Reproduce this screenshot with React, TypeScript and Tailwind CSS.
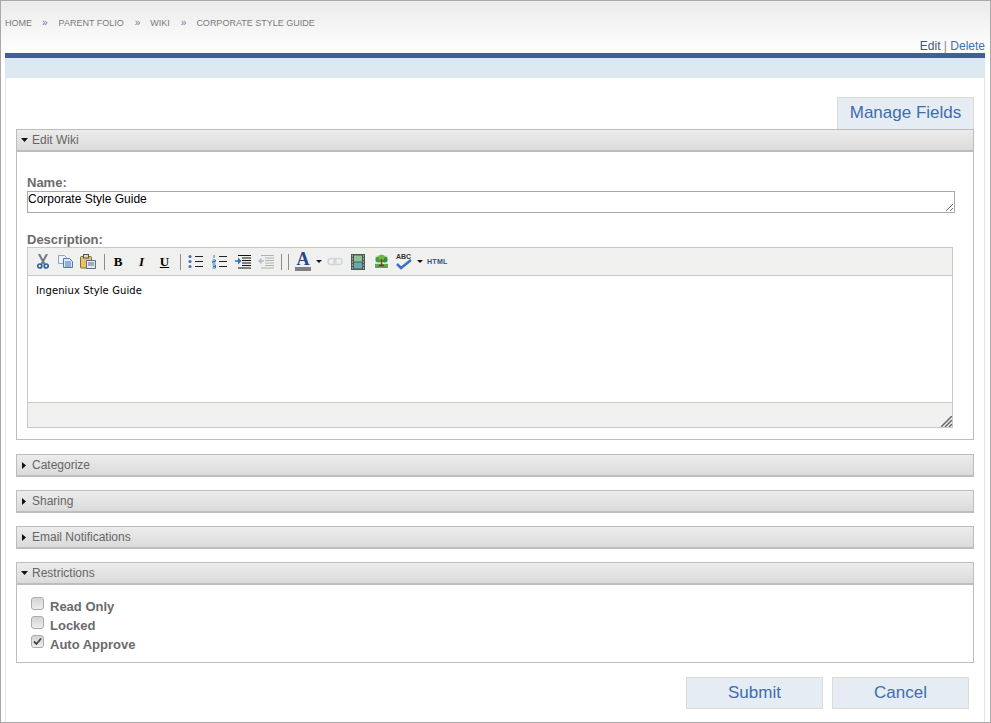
import React from 'react';

const sans = { fontFamily: '"Liberation Sans", Arial, sans-serif' };

const Caret = ({ open }: { open: boolean }) =>
  open ? (
    <svg width="7" height="4" viewBox="0 0 7 4" className="shrink-0">
      <path d="M0 0h7L3.5 4z" fill="#111" />
    </svg>
  ) : (
    <svg width="4" height="7" viewBox="0 0 4 7" className="shrink-0 mx-[1px]">
      <path d="M0 0v7l4-3.5z" fill="#111" />
    </svg>
  );

const PanelHeader = ({ title, open }: { title: string; open?: boolean }) => (
  <div className={`h-[23px] border-2 border-[#bdbdbd] border-t-[1px] border-x-[1px] bg-gradient-to-b from-[#ececec] to-[#dbdbdb] flex items-center pl-[4px] text-[12px] text-[#666666] ${open ? 'gap-[4px]' : 'gap-[5px]'}`}>
    <Caret open={!!open} />
    <span>{title}</span>
  </div>
);

const Sep = ({ ml }: { ml: string }) => <div className={`w-[1px] h-[16px] bg-[#8c8c8c] shrink-0 ${ml}`} />;

const DownArrow = ({ ml }: { ml: string }) => (
  <svg width="6" height="3" viewBox="0 0 6 3" className={`shrink-0 ${ml}`}>
    <path d="M0 0h6L3 3z" fill="#111" />
  </svg>
);

const Lines = ({ color }: { color: string }) => (
  <path d="M7 2.5h8M7 7.5h8M7 12.5h8" stroke={color} strokeWidth="1" />
);

const Toolbar = () => (
  <div className="h-[28px] bg-[#f0f0ee] border-b border-[#c9c9c9] flex items-center">
    {/* cut */}
    <svg width="12" height="15" viewBox="0 0 12 15" className="ml-[9px] shrink-0">
      <path d="M2 0l5.500 10M10 0L4.500 10" stroke="#6f7c88" strokeWidth="2" />
      <circle cx="2.800" cy="12" r="2" fill="none" stroke="#2f5f9e" strokeWidth="1.700" />
      <circle cx="9.200" cy="12" r="2" fill="none" stroke="#2f5f9e" strokeWidth="1.700" />
    </svg>
    {/* copy */}
    <svg width="15" height="13" viewBox="0 0 15 13" className="ml-[9px] shrink-0">
      <path d="M.5.5h6l2 2v6h-8z" fill="#eef3fb" stroke="#8aa6cf" />
      <path d="M5.500 3.500h6l3 3v6h-9z" fill="#dbe7f8" stroke="#4a78b8" />
      <path d="M7 7h6M7 9h6M7 11h6" stroke="#4a78b8" />
    </svg>
    {/* paste */}
    <svg width="16" height="15" viewBox="0 0 16 15" className="ml-[7px] shrink-0">
      <rect x=".5" y="2.500" width="11" height="11.500" rx="1" fill="#e8c468" stroke="#8a6d24" />
      <rect x="3.500" y=".5" width="5" height="3.500" fill="#d8d8d8" stroke="#555" />
      <path d="M6.500 6.500h9v8h-9z" fill="#e6e9ef" stroke="#5a6c86" />
      <path d="M8 9h6M8 11h6" stroke="#5a6c86" />
    </svg>
    <Sep ml="ml-[8px]" />
    <span className="ml-[8px] w-[10px] text-[13px] font-bold leading-none text-black text-center" style={{ fontFamily: '"Liberation Serif", serif' }}>B</span>
    <span className="ml-[14px] w-[9px] text-[13px] font-bold italic leading-none text-black text-center" style={{ fontFamily: '"Liberation Serif", serif' }}>I</span>
    <span className="ml-[13px] w-[11px] text-[13px] font-bold underline leading-none text-black text-center" style={{ fontFamily: '"Liberation Serif", serif' }}>U</span>
    <Sep ml="ml-[10px]" />
    {/* bullets */}
    <svg width="15" height="15" viewBox="0 0 15 15" className="ml-[7px] shrink-0">
      <circle cx="2" cy="2.500" r="1.500" fill="#3d6fb5" />
      <circle cx="2" cy="7.500" r="1.500" fill="#3d6fb5" />
      <circle cx="2" cy="12.500" r="1.500" fill="#3d6fb5" />
      <Lines color="#222" />
    </svg>
    {/* numbers */}
    <svg width="15" height="15" viewBox="0 0 15 15" className="ml-[9px] shrink-0">
      <path d="M2 1v3M.5 6h3v1.500h-3V9h3M.5 11h3v3h-3M1 12.500h2" stroke="#3d6fb5" fill="none" />
      <Lines color="#222" />
    </svg>
    {/* indent */}
    <svg width="16" height="15" viewBox="0 0 16 15" className="ml-[8px] shrink-0">
      <path d="M3 1.500h13M7 4h9M7 6.500h9M7 9h9M7 11.500h9M3 14h13" stroke="#111" />
      <path d="M0 7h4" stroke="#2f6fc0" strokeWidth="1.500" />
      <path d="M3 3.500L6.500 7 3 10.500z" fill="#2f6fc0" />
    </svg>
    {/* outdent */}
    <svg width="16" height="15" viewBox="0 0 16 15" className="ml-[7px] shrink-0">
      <path d="M3 1.500h13M7 4h9M7 6.500h9M7 9h9M7 11.500h9M3 14h13" stroke="#b0b0b0" />
      <path d="M6 7H3" stroke="#a9bfdc" strokeWidth="1.500" />
      <path d="M3.500 3.500L0 7l3.500 3.500z" fill="#a9bfdc" />
    </svg>
    <Sep ml="ml-[7px]" />
    <Sep ml="ml-[6px]" />
    {/* text colour */}
    <div className="ml-[6px] w-[16px] flex flex-col items-center shrink-0">
      <span className="text-[18px] leading-[14px] font-bold text-[#24488c]" style={{ fontFamily: '"Liberation Serif", serif' }}>A</span>
      <div className="w-[16px] h-[4px] bg-[#808080] mt-[1px]" />
    </div>
    <DownArrow ml="ml-[5px]" />
    {/* link, disabled */}
    <svg width="16" height="9" viewBox="0 0 16 9" className="ml-[5px] shrink-0">
      <rect x="1" y="1.500" width="8" height="6" rx="3" fill="none" stroke="#cfd5dd" strokeWidth="1.500" />
      <rect x="7" y="1.500" width="8" height="6" rx="3" fill="none" stroke="#cfd5dd" strokeWidth="1.500" />
    </svg>
    {/* film */}
    <svg width="14" height="16" viewBox="0 0 14 16" className="ml-[8px] shrink-0">
      <rect width="14" height="16" fill="#4a5a50" />
      <rect x="3" y="1.500" width="8" height="6" fill="#8fc09a" />
      <rect x="3" y="8.500" width="8" height="6" fill="#6aa8b0" />
      <path d="M1 2h1M1 5h1M1 8h1M1 11h1M1 14h1M12 2h1M12 5h1M12 8h1M12 11h1M12 14h1" stroke="#e6e6e6" />
    </svg>
    {/* image */}
    <svg width="15" height="15" viewBox="0 0 15 15" className="ml-[9px] shrink-0">
      <rect width="15" height="15" fill="#f4f7f6" />
      <rect x="1" y="1" width="13" height="9" fill="#c9e6f5" />
      <rect x="1" y="10" width="13" height="4" fill="#4fb04a" />
      <circle cx="4.500" cy="5.500" r="3" fill="#4f9a2f" />
      <circle cx="10.500" cy="5.500" r="3" fill="#3f8a25" />
      <circle cx="7.500" cy="3.500" r="3" fill="#6cb840" />
      <path d="M7.500 5v6.500M5 11.500h5" stroke="#6a3d1a" strokeWidth="1.300" />
      <path d="M3 13h2M8 13h4" stroke="#d43c8c" />
    </svg>
    {/* spell check */}
    <div className="relative ml-[7px] w-[16px] h-[16px] shrink-0">
      <span className="absolute left-0 -top-[2px] text-[7px] font-bold leading-[9px] text-[#333]" style={sans}>ABC</span>
      <svg width="16" height="11" viewBox="0 0 16 11" className="absolute left-0 top-[5px]">
        <path d="M1 5l4 4L15 1" fill="none" stroke="#3d72c4" strokeWidth="2.500" />
      </svg>
    </div>
    <DownArrow ml="ml-[5px]" />
    <span className="ml-[4px] text-[7px] font-bold leading-none text-[#2c5288] tracking-[0.3px]" style={sans}>HTML</span>
  </div>
);

const Restriction = ({ label, checked }: { label: string; checked?: boolean }) => (
  <label className="h-[19px] flex items-center gap-[6px] text-[13px] font-bold text-[#6b6b6b]">
    <span className="relative w-[13px] h-[13px] -mt-[7px] shrink-0">
      <input
        type="checkbox"
        disabled
        defaultChecked={checked}
        className="block appearance-none w-[13px] h-[13px] m-0 rounded-[3px] border border-[#ababab] bg-gradient-to-b from-[#d4d4d4] to-[#ededed]"
      />
      {checked && (
        <svg width="13" height="13" viewBox="0 0 13 13" className="absolute inset-0">
          <path d="M3 6.500l2.500 2.500L10 3.500" fill="none" stroke="#444" strokeWidth="1.800" />
        </svg>
      )}
    </span>
    {label}
  </label>
);

const ActionButton = ({ label }: { label: string }) => (
  <button className="w-[137px] h-[32px] bg-[#e6ecf4] border border-[#dcdcd0] text-[17px] text-[#3f6cad]">
    {label}
  </button>
);

export default function App() {
  return (
    <div className="w-[991px] h-[723px] border border-[#a9a9a9] bg-white overflow-hidden" style={sans}>
      <div className="h-[52px] bg-gradient-to-b from-[#ebebeb] to-white pl-[4px] pr-[5px] flex flex-col">
        <div className="flex items-center mt-[17px] h-[12px] text-[9px] text-[#7a7a7a]">
          <span>HOME</span>
          <span className="ml-[10px] -mt-[2px] text-[#5f7fa8] text-[10px] leading-none">»</span>
          <span className="ml-[11px]">PARENT FOLIO</span>
          <span className="ml-[11px] -mt-[2px] text-[#5f7fa8] text-[10px] leading-none">»</span>
          <span className="ml-[10px]">WIKI</span>
          <span className="ml-[11px] -mt-[2px] text-[#5f7fa8] text-[10px] leading-none">»</span>
          <span className="ml-[10px]">CORPORATE STYLE GUIDE</span>
        </div>
        <div className="mt-auto text-right text-[12px] leading-[14px] text-[#888]">
          <a className="text-[#44567a]">Edit</a> | <a className="text-[#3f6cad]">Delete</a>
        </div>
      </div>

      <div className="ml-[4px] mr-[5px] h-[669px] border-x border-[#e6e6e6]">
        <div className="-mx-[1px] h-[5px] bg-[#41609a]" />
        <div className="-mx-[1px] h-[20px] bg-[#dce9f0]" />
        <div className="px-[10px] pt-[19px]">
          <div className="flex justify-end">
            <div className="w-[137px] h-[32px] pb-[2px] bg-[#e6ecf4] border border-[#dcdcd0] border-b-0 flex items-center justify-center text-[17px] text-[#3f6cad]">
              Manage Fields
            </div>
          </div>

          <PanelHeader title="Edit Wiki" open />
          <div className="h-[288px] border border-t-0 border-[#bdbdbd] px-[10px]">
            <div className="pt-[24px] text-[13px] leading-[14px] font-bold text-[#6b6b6b]">Name:</div>
            <textarea
              defaultValue="Corporate Style Guide"
              className="block w-[928px] h-[22px] mt-[1px] border border-[#a9a9a9] text-[12px] leading-[14px] text-black px-[0px] outline-none"
              style={sans}
            />
            <div className="mt-[20px] text-[13px] leading-[14px] font-bold text-[#6b6b6b]">Description:</div>
            <div className="relative w-[926px] h-[181px] border border-[#c9c9c9] flex flex-col">
              <Toolbar />
              <div className="flex-1 px-[8px] pt-[9px] text-[10px] leading-[12px] tracking-[0.1px] text-black" style={{ fontFamily: '"DejaVu Sans", Verdana, sans-serif' }}>
                Ingeniux Style Guide
              </div>
              <div className="h-[25px] bg-[#f0f0ee] border-t border-[#c9c9c9]" />
              <svg width="11" height="11" viewBox="0 0 11 11" className="absolute right-0 bottom-0">
                <path d="M0 11L11 0M4 11l7-7M8 11l3-3" stroke="#666" strokeWidth="1.500" />
              </svg>
            </div>
          </div>

          <div className="mt-[14px]"><PanelHeader title="Categorize" /></div>
          <div className="mt-[13px]"><PanelHeader title="Sharing" /></div>
          <div className="mt-[13px]"><PanelHeader title="Email Notifications" /></div>
          <div className="mt-[13px]"><PanelHeader title="Restrictions" open /></div>
          <div className="h-[78px] border border-t-0 border-[#bdbdbd] pl-[14px] pt-[12px]">
            <Restriction label="Read Only" />
            <Restriction label="Locked" />
            <Restriction label="Auto Approve" checked />
          </div>

          <div className="mt-[14px] pr-[5px] flex justify-end gap-[9px]">
            <ActionButton label="Submit" />
            <ActionButton label="Cancel" />
          </div>
        </div>
      </div>
    </div>
  );
}
